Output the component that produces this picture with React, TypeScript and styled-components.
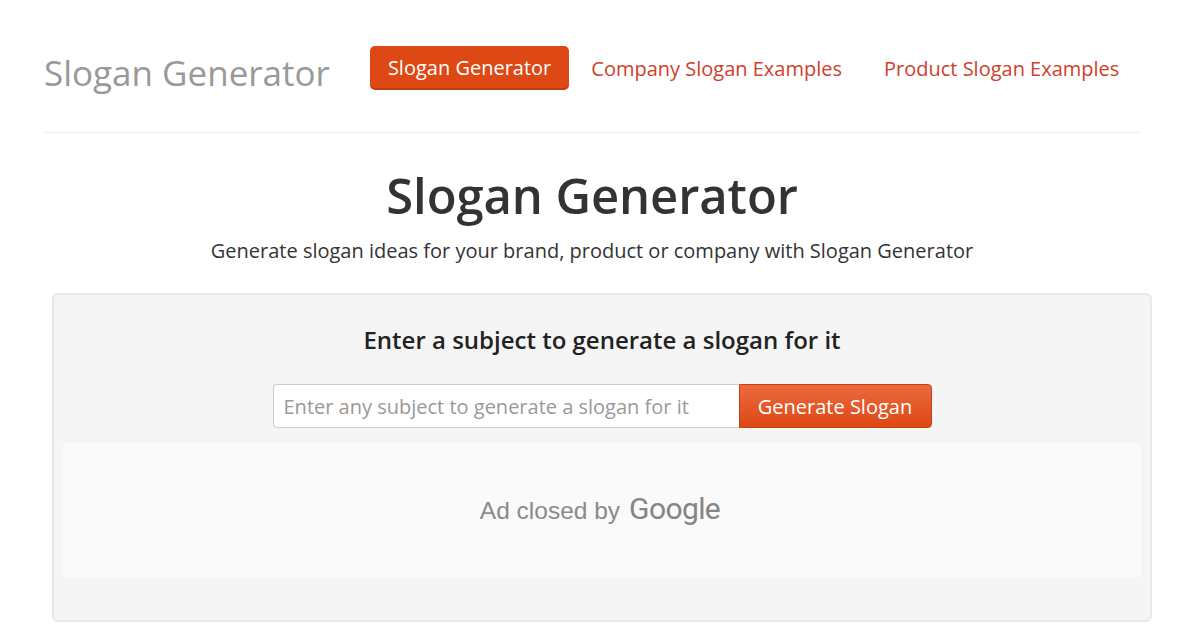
import React from "react";
import styled, { createGlobalStyle } from "styled-components";

const Global = createGlobalStyle`
  html, body { margin: 0; padding: 0; background: #fff; }
  body { font-family: "Open Sans", "Noto Sans", sans-serif; color: #333; }
  * { box-sizing: border-box; }
`;

const Page = styled.div`
  width: 1200px;
  padding-top: 46px;
`;

const Header = styled.header`
  margin: 0 60px 0 44px;
  display: flex;
  align-items: center;
  height: 44px;
  padding-bottom: 42px;
  border-bottom: 1px solid #eee;
  box-sizing: content-box;
`;

const Brand = styled.a`
  font-size: 35px;
  color: #999;
  text-decoration: none;
  margin-right: 40px;
  margin-top: 8px;
`;

const Nav = styled.nav`
  display: flex;
  align-items: center;
`;

const NavLink = styled.a<{ $active?: boolean }>`
  display: inline-flex;
  align-items: center;
  height: 44px;
  padding: 0 ${(p) => (p.$active ? "18px" : "20px")};
  margin-left: ${(p) => (p.$active ? "0" : "2px")};
  border-radius: 5px;
  font-size: 20px;
  text-decoration: none;
  color: ${(p) => (p.$active ? "#fff" : "#d0402a")};
  background: ${(p) => (p.$active ? "#dd4814" : "transparent")};
  border-bottom: ${(p) => (p.$active ? "2px solid #c23a0e" : "none")};
`;

const Hero = styled.section`
  margin: 0 60px 0 44px;
  text-align: center;
  padding-top: 29px;
`;

const Title = styled.h1`
  margin: 0;
  font-size: 49px;
  font-weight: 600;
  color: #333;
  letter-spacing: -0.1px;
  line-height: 66px;
`;

const Lead = styled.p`
  margin: 11px 0 0;
  font-size: 20px;
  color: #333;
  line-height: 24px;
`;

const Well = styled.section`
  margin: 30px 48px 0 52px;
  background: #f5f5f5;
  border: 2px solid #e8e8e8;
  border-radius: 6px;
  padding: 28px 9px 43px;
  display: flex;
  flex-direction: column;
  align-items: center;
`;

const FormTitle = styled.h3`
  margin: 0;
  font-size: 24px;
  font-weight: 600;
  color: #222;
  letter-spacing: 0;
  line-height: 34px;
`;

const Form = styled.form`
  display: flex;
  margin-top: 27px;
`;

const Input = styled.input`
  width: 466px;
  height: 44px;
  border: 1px solid #ccc;
  border-right: none;
  border-radius: 4px 0 0 4px;
  padding: 0 10px;
  font-family: "Open Sans", "Noto Sans", sans-serif;
  font-size: 20px;
  background: #fff;
  outline: none;
  &::placeholder { color: #999; }
`;

const Button = styled.button`
  width: 193px;
  height: 44px;
  border: 1px solid #c8400f;
  border-radius: 0 4px 4px 0;
  background: linear-gradient(#ec6a3e, #dd4814);
  color: #fff;
  font-family: "Open Sans", "Noto Sans", sans-serif;
  font-size: 20px;
  cursor: pointer;
`;

const Ad = styled.div`
  align-self: stretch;
  margin-top: 15px;
  height: 134px;
  background: #fafafa;
  display: flex;
  align-items: center;
  justify-content: center;
  padding-top: 2px;
  padding-right: 4px;
  color: #8a8a8a;
  font-family: "Liberation Sans", Arial, sans-serif;
  font-size: 24.5px;
  gap: 9px;
`;

const GoogleWord = styled.span`
  font-family: "Roboto", "Liberation Sans", sans-serif;
  font-weight: 400;
  font-size: 30px;
  color: #858585;
  letter-spacing: -0.6px;
  margin-top: -6px;
`;

export default function App() {
  return (
    <>
      <Global />
      <Page>
        <Header>
          <Brand href="#">Slogan Generator</Brand>
          <Nav>
            <NavLink $active href="#">Slogan Generator</NavLink>
            <NavLink href="#">Company Slogan Examples</NavLink>
            <NavLink href="#">Product Slogan Examples</NavLink>
          </Nav>
        </Header>
        <Hero>
          <Title>Slogan Generator</Title>
          <Lead>Generate slogan ideas for your brand, product or company with Slogan Generator</Lead>
        </Hero>
        <Well>
          <FormTitle>Enter a subject to generate a slogan for it</FormTitle>
          <Form onSubmit={(e) => e.preventDefault()}>
            <Input placeholder="Enter any subject to generate a slogan for it" />
            <Button type="submit">Generate Slogan</Button>
          </Form>
          <Ad>
            <span>Ad closed by</span>
            <GoogleWord>Google</GoogleWord>
          </Ad>
        </Well>
      </Page>
    </>
  );
}
